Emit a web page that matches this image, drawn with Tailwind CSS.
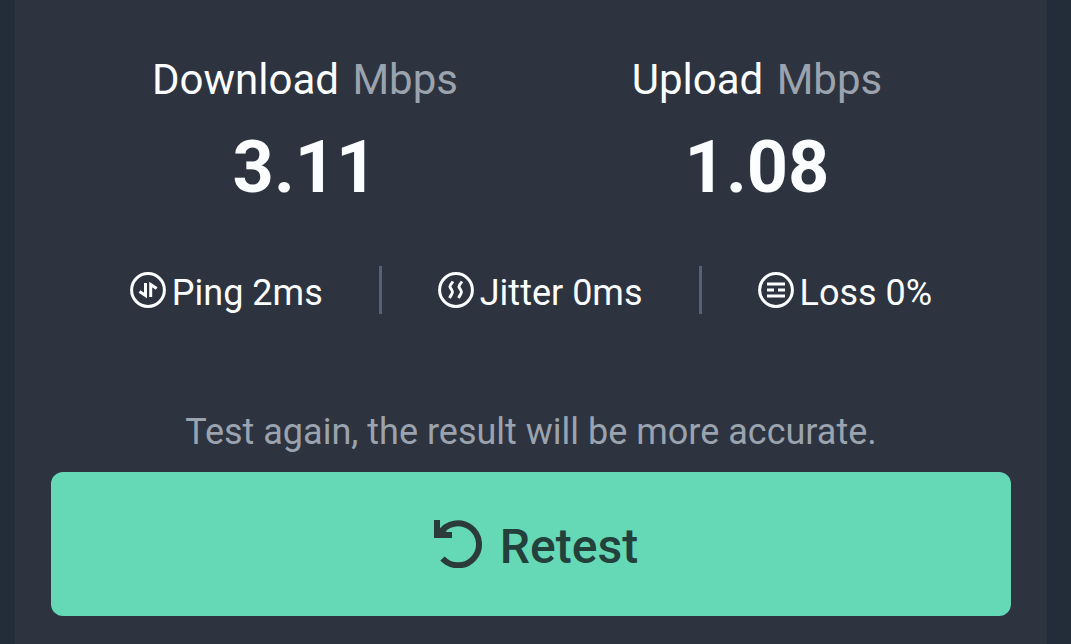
<!DOCTYPE html>
<html lang="en">
<head>
<meta charset="utf-8">
<meta name="viewport" content="width=device-width, initial-scale=1">
<title>Speed test</title>
<script src="https://cdn.jsdelivr.net/npm/@tailwindcss/browser@4"></script>
</head>
<body class="min-h-screen bg-[#232d39] pl-[15px] pr-6 font-['Roboto',sans-serif] text-[#fbfdff]">
<main class="min-h-screen bg-[#2d3440] px-9 pt-14 pb-7">
  <section class="grid grid-cols-2 px-7 text-center">
    <div>
      <h2 class="text-[42px] leading-12">Download <span class="ml-[3px] text-[#9ba3af]">Mbps</span></h2>
      <p class="mt-[22px] text-[72px] leading-21 font-bold">3.11</p>
    </div>
    <div>
      <h2 class="text-[42px] leading-12">Upload <span class="ml-[3px] text-[#9ba3af]">Mbps</span></h2>
      <p class="mt-[22px] text-[72px] leading-21 font-bold">1.08</p>
    </div>
  </section>
  <section class="mt-14 flex items-center justify-center gap-14 text-4xl leading-10">
    <div class="flex items-center gap-1.5">
      <svg class="size-9" viewBox="0 0 36 36" fill="none" stroke="currentColor" stroke-width="3" aria-hidden="true">
        <circle cx="18" cy="18" r="16.4"/>
        <path d="M15.500 11v12.500L9.500 19.500M20.700 25V12.500l6 4" stroke-width="3"/>
      </svg>
      <span class="pt-1.5">Ping 2ms</span>
    </div>
    <div class="h-12 w-[3px] bg-[#536274]"></div>
    <div class="flex items-center gap-1.5">
      <svg class="size-9" viewBox="0 0 36 36" fill="none" stroke="currentColor" stroke-width="3" aria-hidden="true">
        <circle cx="18" cy="18" r="16.4"/>
        <path d="M15 9.500l-2.500 3.500q-1 1.500 0 3l1.500 2.500q1 1.500 0 3L11.500 26M24 9.500l-2.500 3.500q-1 1.500 0 3l1.500 2.500q1 1.500 0 3L20.500 26" stroke-width="2.900"/>
      </svg>
      <span class="pt-1.5">Jitter 0ms</span>
    </div>
    <div class="h-12 w-[3px] bg-[#536274]"></div>
    <div class="flex items-center gap-1.5">
      <svg class="size-9" viewBox="0 0 36 36" fill="none" stroke="currentColor" stroke-width="3" aria-hidden="true">
        <circle cx="18" cy="18" r="16.4"/>
        <path d="M9 12h18M9 18h7M20 18h7M9 24h18" stroke-width="3"/>
      </svg>
      <span class="pt-1.5">Loss 0%</span>
    </div>
  </section>
  <p class="mt-24 text-center text-4xl leading-11 text-[#9ba3af]">Test again, the result will be more accurate.</p>
  <button type="button" class="mt-[18px] flex h-36 w-full items-center justify-center gap-4 rounded-xl bg-[#65d8b6] pl-2.5 text-5xl font-medium text-[#23403b]">
    <svg class="h-12 w-[50px]" viewBox="0 0 50 48" fill="none" stroke="#2b3b39" stroke-width="6" aria-hidden="true">
      <path d="M6 13.500A21 21 0 1 1 8.500 38.500"/>
      <path d="M0 0h6v8l7 4h5v6H0z" fill="#2b3b39" stroke="none"/>
    </svg>
    <span class="pt-1.5">Retest</span>
  </button>
</main>
</body>
</html>
